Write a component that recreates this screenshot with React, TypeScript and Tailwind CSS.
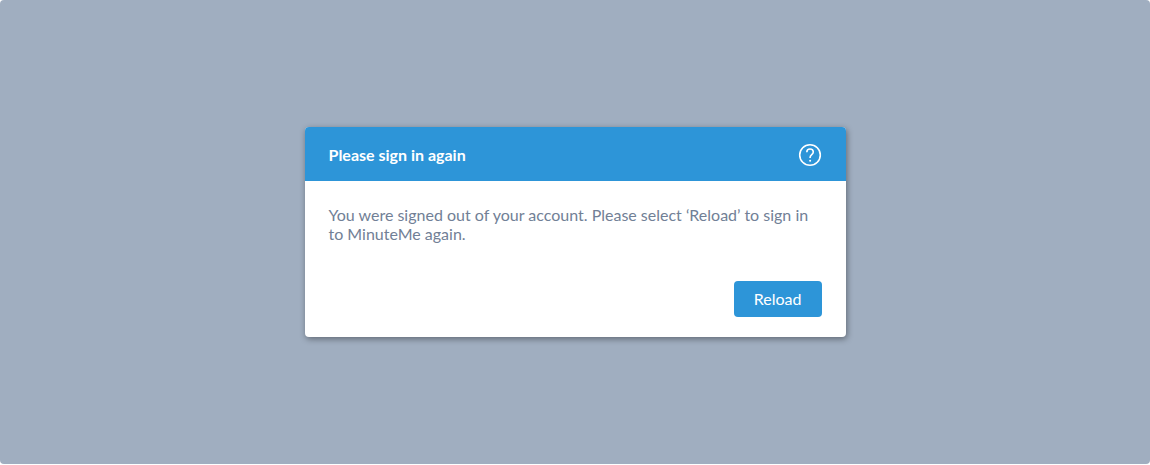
import { useId } from "react"

function HelpIcon() {
  return (
    <svg viewBox="0 0 24 24" fill="none" stroke="currentColor" className="size-6" aria-hidden="true">
      <circle cx="12" cy="12" r="10.3" strokeWidth="1.6" />
      <path
        d="M8.8 9.2C8.8 7.2 10.2 6 12 6s3.3 1.2 3.3 3c0 1.5-.9 2.2-1.8 2.9-.9.7-1.4 1.2-1.4 2.6v.6"
        strokeWidth="1.6"
      />
      <circle cx="12.1" cy="17.7" r="1" fill="currentColor" stroke="none" />
    </svg>
  )
}

export default function App() {
  const titleId = useId()
  const textId = useId()

  return (
    <div className="h-screen bg-white pb-px font-['Lato',sans-serif]">
      <main className="flex h-full items-center justify-center rounded bg-[#a0aec0] px-4">
        <div
          role="alertdialog"
          aria-labelledby={titleId}
          aria-describedby={textId}
          className="w-full max-w-[541px] overflow-hidden rounded bg-white shadow-[1px_2px_6px_rgba(0,0,0,0.4)]"
        >
          <header className="flex items-center justify-between bg-[#2d95d8] px-6 pt-4 pb-[14px] text-white">
            <h1 id={titleId} className="text-base font-bold">
              Please sign in again
            </h1>
            <button type="button" aria-label="Help">
              <HelpIcon />
            </button>
          </header>
          <div className="px-6 pt-6 pb-5">
            <p id={textId} className="text-base leading-[19px] text-[#718096]">
              You were signed out of your account. Please select ‘Reload’ to sign in to MinuteMe again.
            </p>
            <div className="mt-[38px] flex justify-end">
              <button type="button" className="h-9 rounded bg-[#2d95d8] px-5 text-base text-white">
                Reload
              </button>
            </div>
          </div>
        </div>
      </main>
    </div>
  )
}
